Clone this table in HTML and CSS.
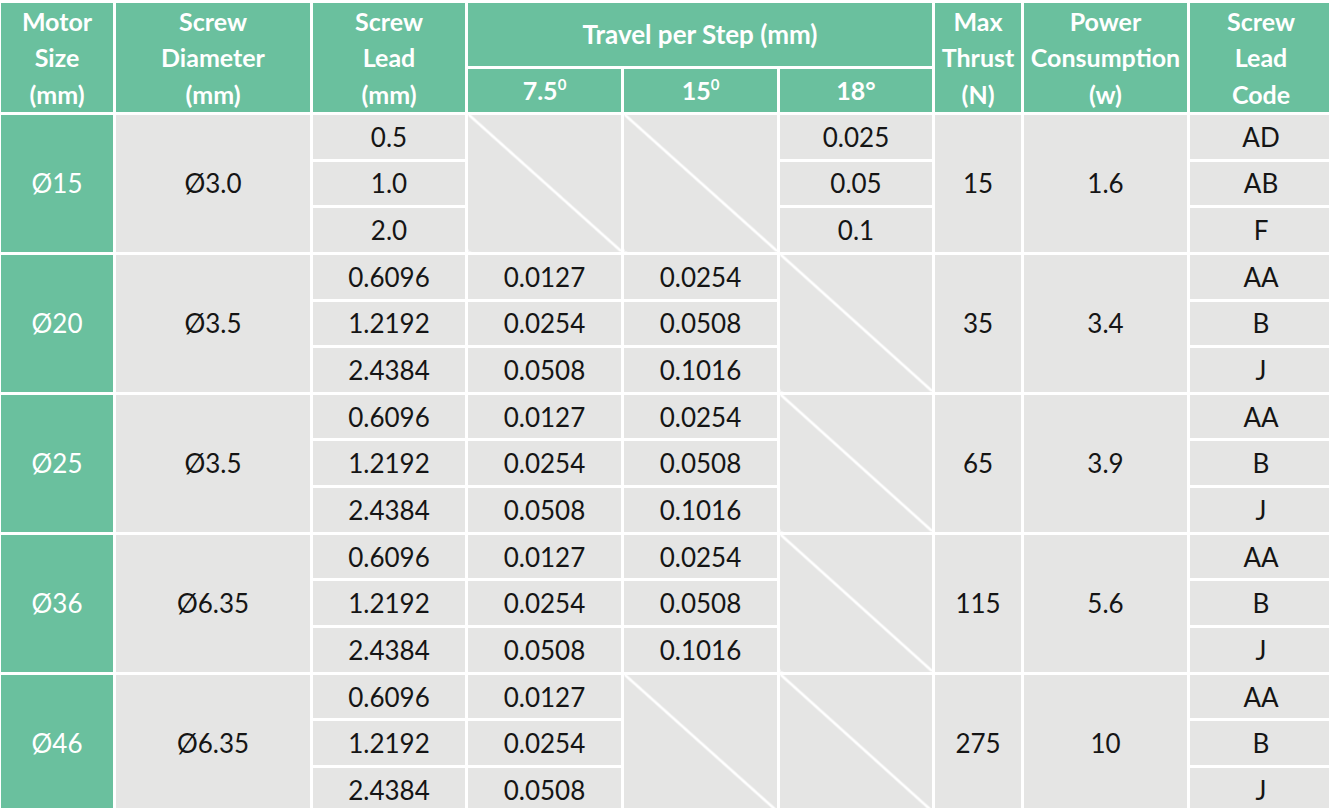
FILE: index.html
```html
<!DOCTYPE html>
<html>
<head>
<meta charset="utf-8">
<link rel="stylesheet" href="styles.css">
</head>
<body>
<table class="spec">
  <colgroup>
    <col class="c1"><col class="c2"><col class="c3"><col class="c4"><col class="c5"><col class="c6"><col class="c7"><col class="c8"><col class="c9">
  </colgroup>
  <thead>
    <tr class="h1">
      <th rowspan="2">Motor<br>Size<br>(mm)</th>
      <th rowspan="2">Screw<br>Diameter<br>(mm)</th>
      <th rowspan="2">Screw<br>Lead<br>(mm)</th>
      <th colspan="3" class="travel">Travel per Step (mm)</th>
      <th rowspan="2">Max<br>Thrust<br>(N)</th>
      <th rowspan="2">Power<br>Consumption<br>(w)</th>
      <th rowspan="2">Screw<br>Lead<br>Code</th>
    </tr>
    <tr class="h2">
      <th>7.5<sup class="deg">0</sup></th>
      <th>15<sup class="deg">0</sup></th>
      <th>18°</th>
    </tr>
  </thead>
  <tbody>
    <tr>
      <td rowspan="3" class="size">Ø15</td>
      <td rowspan="3">Ø3.0</td>
      <td>0.5</td>
      <td rowspan="3" class="diag"></td>
      <td rowspan="3" class="diag"></td>
      <td>0.025</td>
      <td rowspan="3">15</td>
      <td rowspan="3">1.6</td>
      <td>AD</td>
    </tr>
    <tr><td>1.0</td><td>0.05</td><td>AB</td></tr>
    <tr><td>2.0</td><td>0.1</td><td>F</td></tr>

    <tr>
      <td rowspan="3" class="size">Ø20</td>
      <td rowspan="3">Ø3.5</td>
      <td>0.6096</td><td>0.0127</td><td>0.0254</td>
      <td rowspan="3" class="diag"></td>
      <td rowspan="3">35</td>
      <td rowspan="3">3.4</td>
      <td>AA</td>
    </tr>
    <tr><td>1.2192</td><td>0.0254</td><td>0.0508</td><td>B</td></tr>
    <tr><td>2.4384</td><td>0.0508</td><td>0.1016</td><td>J</td></tr>

    <tr>
      <td rowspan="3" class="size">Ø25</td>
      <td rowspan="3">Ø3.5</td>
      <td>0.6096</td><td>0.0127</td><td>0.0254</td>
      <td rowspan="3" class="diag"></td>
      <td rowspan="3">65</td>
      <td rowspan="3">3.9</td>
      <td>AA</td>
    </tr>
    <tr><td>1.2192</td><td>0.0254</td><td>0.0508</td><td>B</td></tr>
    <tr><td>2.4384</td><td>0.0508</td><td>0.1016</td><td>J</td></tr>

    <tr>
      <td rowspan="3" class="size">Ø36</td>
      <td rowspan="3">Ø6.35</td>
      <td>0.6096</td><td>0.0127</td><td>0.0254</td>
      <td rowspan="3" class="diag"></td>
      <td rowspan="3">115</td>
      <td rowspan="3">5.6</td>
      <td>AA</td>
    </tr>
    <tr><td>1.2192</td><td>0.0254</td><td>0.0508</td><td>B</td></tr>
    <tr><td>2.4384</td><td>0.0508</td><td>0.1016</td><td>J</td></tr>

    <tr>
      <td rowspan="3" class="size">Ø46</td>
      <td rowspan="3">Ø6.35</td>
      <td>0.6096</td><td>0.0127</td>
      <td rowspan="3" class="diag"></td>
      <td rowspan="3" class="diag"></td>
      <td rowspan="3">275</td>
      <td rowspan="3">10</td>
      <td>AA</td>
    </tr>
    <tr><td>1.2192</td><td>0.0254</td><td>B</td></tr>
    <tr><td>2.4384</td><td>0.0508</td><td>J</td></tr>
  </tbody>
</table>
</body>
</html>
```

FILE: styles.css
```css
html, body {
  margin: 0;
  padding: 0;
  background: #ffffff;
  overflow: hidden;
}

.spec {
  width: 1334px;
  margin-left: -2px;
  border-collapse: collapse;
  table-layout: fixed;
  font-family: Lato, "Open Sans", sans-serif;
  color: #151515;
}

.c1 { width: 115px; }
.c2 { width: 197px; }
.c3 { width: 155px; }
.c4 { width: 156px; }
.c5 { width: 156px; }
.c6 { width: 155px; }
.c7 { width: 89px; }
.c8 { width: 166px; }
.c9 { width: 145px; }

.spec th,
.spec td {
  border: 3px solid #ffffff;
  padding: 0;
  text-align: center;
  vertical-align: middle;
  overflow: hidden;
  white-space: nowrap;
}

.spec th {
  background: #6ac09e;
  color: #ffffff;
  font-weight: 700;
  font-size: 25px;
  line-height: 36.3px;
}

.h1 { height: 65px; }
.h2 { height: 45px; }

.travel { padding-top: 2px; }
.spec .travel { font-size: 26px; }

.deg {
  font-size: 15px;
  line-height: 0;
  vertical-align: 10px;
}

.spec td {
  background: #e5e5e4;
  font-size: 26px;
  line-height: 28px;
}

.spec tbody tr { height: 46.67px; }

.spec td.size {
  background: #6ac09e;
  color: #ffffff;
}

.spec td.diag {
  background:
    linear-gradient(to top right,
      rgba(255,255,255,0) calc(50% - 1.6px),
      #ffffff calc(50% - 1px),
      #ffffff calc(50% + 1px),
      rgba(255,255,255,0) calc(50% + 1.6px)),
    #e5e5e4;
}
```
